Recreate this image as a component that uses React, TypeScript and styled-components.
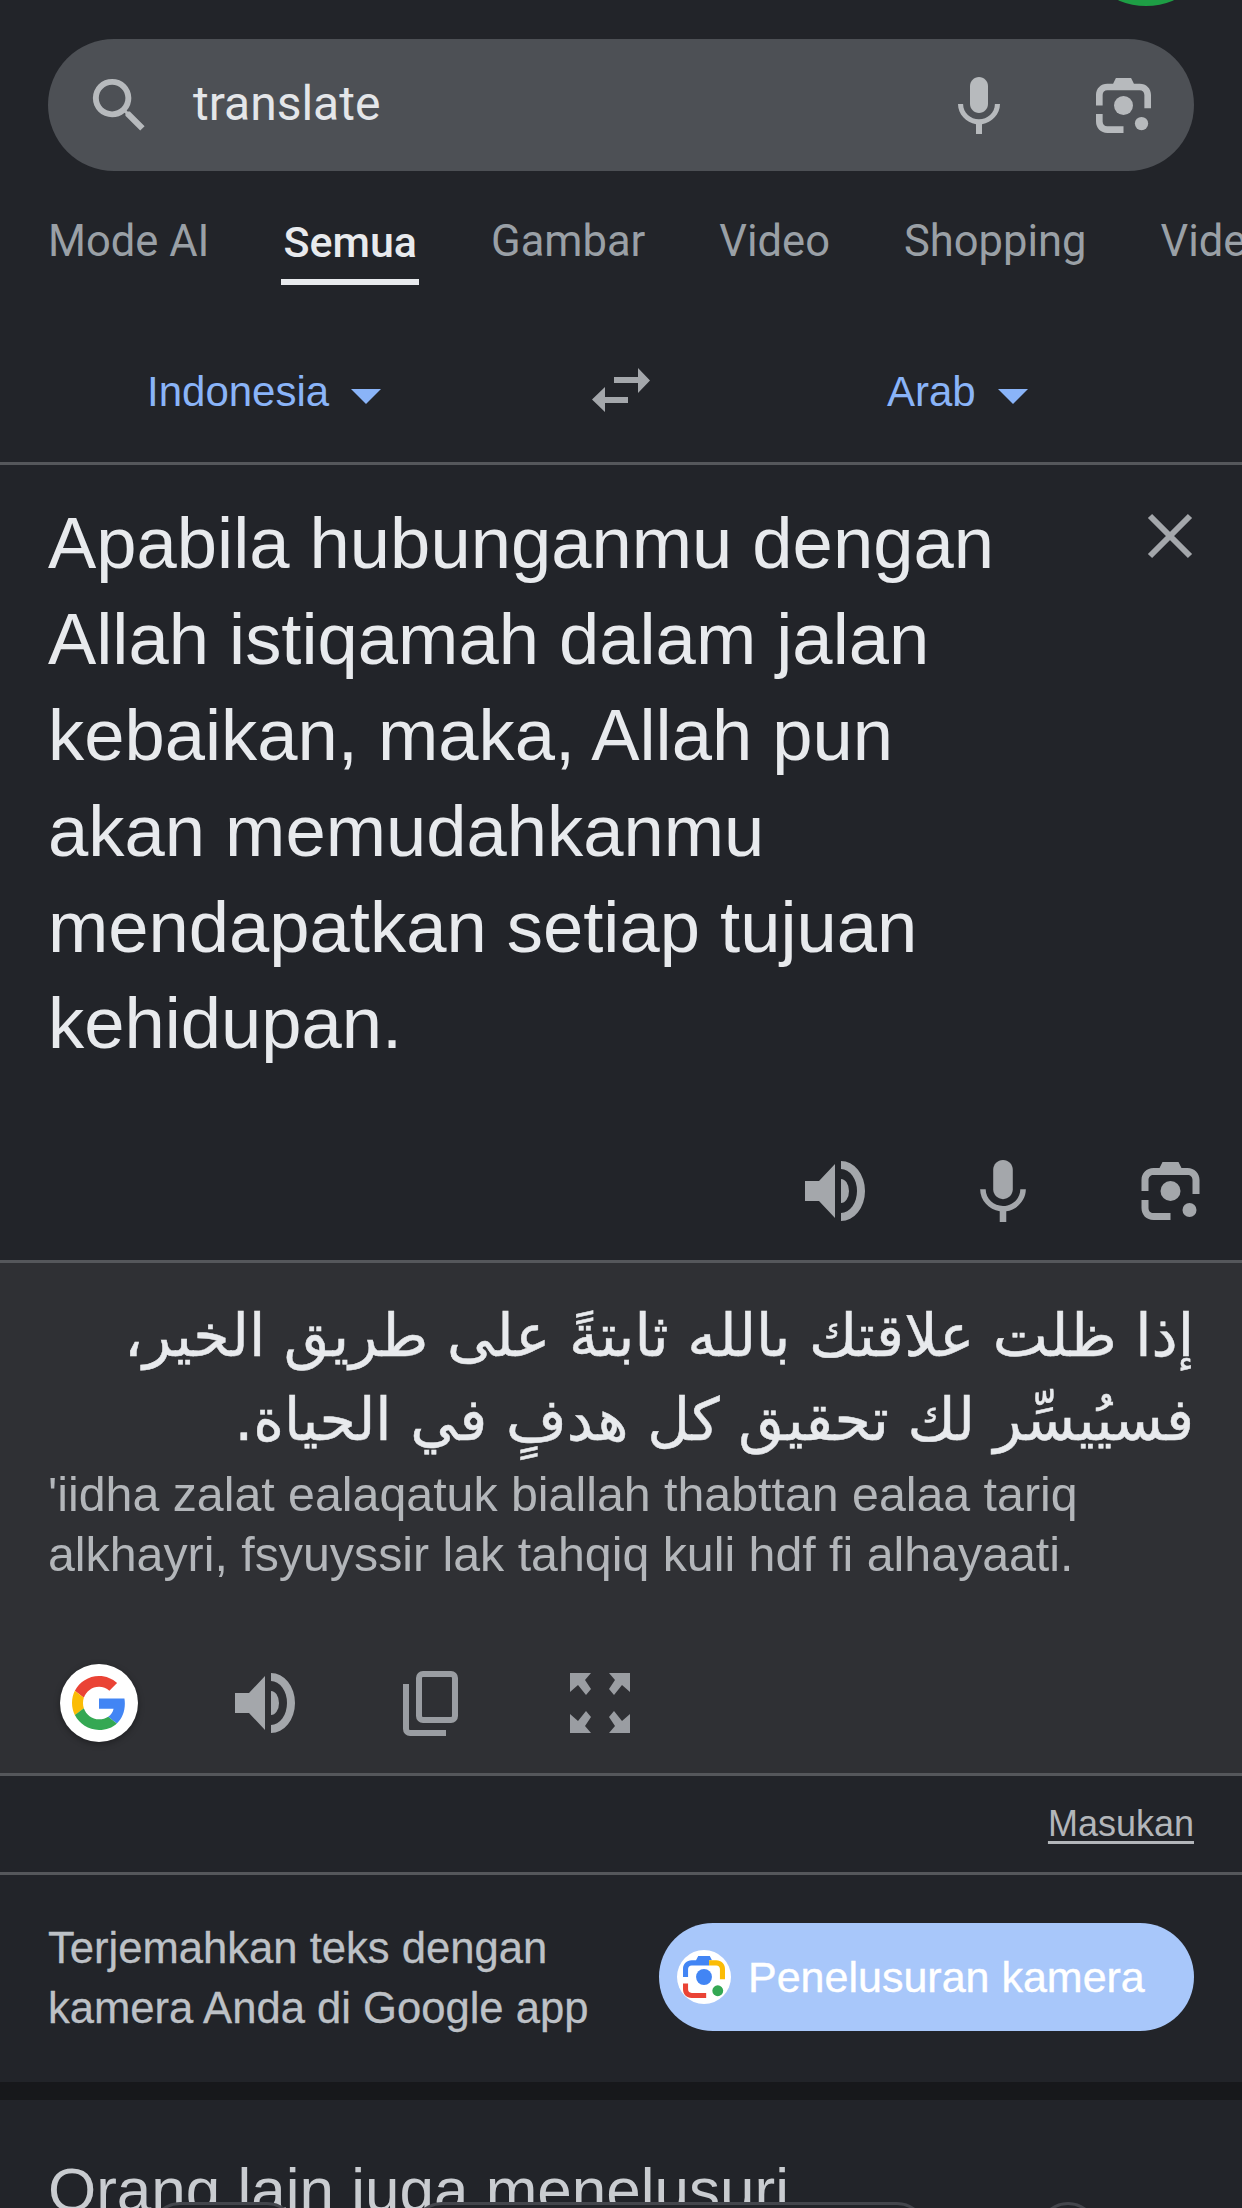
import React from "react";
import styled, { createGlobalStyle } from "styled-components";

const Global = createGlobalStyle`
  html, body {
    margin: 0;
    padding: 0;
    background: #222429;
  }
`;

const Page = styled.div`
  width: 1242px;
  height: 2208px;
  overflow: hidden;
  background: #222429;
  font-family: "Liberation Sans", Arial, sans-serif;
`;

const TopStrip = styled.div`
  height: 39px;
  display: flex;
  justify-content: flex-end;
  padding-right: 26px;
  overflow: hidden;
`;

const Avatar = styled.div`
  width: 140px;
  height: 140px;
  margin-top: -134px;
  border-radius: 50%;
  background: #1e9e45;
`;

const SearchBar = styled.div`
  margin: 0 48px;
  height: 132px;
  border-radius: 66px;
  background: #4d5055;
  display: flex;
  align-items: center;
  padding: 0 42px 0 36px;
`;

const SearchText = styled.span`
  flex: 1;
  margin: -3px 0 0 38px;
  font-family: Roboto, sans-serif;
  font-size: 48px;
  color: #e4e6e9;
`;

const SearchIcons = styled.div`
  display: flex;
  align-items: center;
  gap: 94px;
`;

const Tabs = styled.nav`
  height: 114px;
  display: flex;
  gap: 74px;
  padding-left: 48px;
  overflow: hidden;
`;

const Tab = styled.div<{ $active?: boolean }>`
  height: 113px;
  box-sizing: border-box;
  padding-top: 46px;
  font-family: Roboto, sans-serif;
  font-size: ${p => (p.$active ? 43 : 43.5)}px;
  font-weight: ${p => (p.$active ? 500 : 400)};
  line-height: 50px;
  color: ${p => (p.$active ? "#e8eaed" : "#9aa0a6")};
  white-space: nowrap;
  flex: none;
  position: relative;
  &::after {
    content: "";
    display: ${p => (p.$active ? "block" : "none")};
    position: absolute;
    left: -2px;
    right: -2px;
    top: 108px;
    height: 6px;
    background: #e8eaed;
  }
`;

const LangRow = styled.div`
  height: 180px;
  box-sizing: border-box;
  padding: 82px 0 0 147px;
  display: flex;
  align-items: flex-start;
  border-bottom: 3px solid #55575b;
`;

const LangLabel = styled.div<{ $width: number }>`
  width: ${p => p.$width}px;
  flex: none;
  display: flex;
  align-items: center;
  gap: 22px;
  font-size: 42px;
  line-height: 50px;
  color: #8ab4f8;
  white-space: nowrap;
`;

const Caret = styled.span`
  width: 0;
  height: 0;
  margin-top: 8px;
  border-left: 15px solid transparent;
  border-right: 15px solid transparent;
  border-top: 15px solid #8ab4f8;
`;

const SwapCell = styled.div`
  width: 58px;
  margin: 1px 237px 0 0;
  flex: none;
`;

const Source = styled.section`
  height: 798px;
  box-sizing: border-box;
  padding: 30px 0 0 48px;
  display: flex;
  flex-direction: column;
  border-bottom: 3px solid #55575b;
`;

const SourceTop = styled.div`
  display: flex;
  justify-content: space-between;
  padding-right: 49px;
`;

const SourceText = styled.div`
  font-size: 72.4px;
  line-height: 96px;
  color: #e8eaed;
  white-space: nowrap;
`;

const CloseBtn = styled.div`
  margin-top: 18px;
  line-height: 0;
`;

const SourceActions = styled.div`
  margin-top: 89px;
  display: flex;
  justify-content: flex-end;
  align-items: center;
  padding-right: 42px;
  gap: 115px;
`;

const Result = styled.section`
  height: 513px;
  box-sizing: border-box;
  padding: 31px 48px 0;
  background: #2f3034;
  border-bottom: 3px solid #55575b;
`;

const ArabicText = styled.div`
  direction: rtl;
  font-family: "DejaVu Sans", sans-serif;
  font-size: 58.7px;
  line-height: 84px;
  color: #e8eaed;
  white-space: nowrap;
  -webkit-text-stroke: 0.5px #e8eaed;
`;

const Romanized = styled.div`
  margin-top: 2px;
  font-size: 48.3px;
  line-height: 60px;
  color: #b3b6ba;
  white-space: nowrap;
`;

const ResultActions = styled.div`
  margin-top: 80px;
  display: flex;
  align-items: center;
  padding-left: 12px;
`;

const GoogleBadge = styled.div`
  width: 78px;
  height: 78px;
  border-radius: 50%;
  background: #fff;
  display: flex;
  align-items: center;
  justify-content: center;
  box-shadow: 0 2px 6px rgba(0, 0, 0, 0.35);
  margin-right: 97px;
`;

const ActionGap = styled.div<{ $w: number }>`
  width: ${p => p.$w}px;
  flex: none;
`;

const FeedbackRow = styled.div`
  height: 99px;
  box-sizing: border-box;
  border-bottom: 3px solid #55575b;
  display: flex;
  justify-content: flex-end;
  padding: 28px 48px 0 0;
`;

const Feedback = styled.a`
  font-size: 36px;
  line-height: 40px;
  color: #b3b6ba;
  text-decoration: underline;
  text-underline-offset: 5px;
`;

const PromoRow = styled.div`
  height: 207px;
  box-sizing: border-box;
  padding: 48px 48px 0;
  display: flex;
  justify-content: space-between;
  align-items: flex-start;
`;

const PromoText = styled.div`
  margin-top: -5px;
  font-size: 43.6px;
  line-height: 60px;
  color: #bdc1c6;
  white-space: nowrap;
  -webkit-text-stroke: 0.3px #bdc1c6;
`;

const CameraButton = styled.div`
  width: 535px;
  height: 108px;
  flex: none;
  border-radius: 54px;
  background: #a8c7fa;
  display: flex;
  align-items: center;
  padding-left: 18px;
  box-sizing: border-box;
  gap: 17px;
  font-size: 43px;
  color: #fff;
  white-space: nowrap;
  -webkit-text-stroke: 0.4px #fff;
`;

const LensBadge = styled.div`
  width: 54px;
  height: 54px;
  border-radius: 50%;
  background: #fff;
  display: flex;
  align-items: center;
  justify-content: center;
`;

const Band = styled.div`
  height: 18px;
  background: #17181b;
`;

const Related = styled.section`
  padding: 55px 48px 0;
  position: relative;
`;

const RelatedTitle = styled.h2`
  margin: 0;
  font-size: 62px;
  font-weight: 400;
  line-height: 70px;
  color: #c9ccd0;
  white-space: nowrap;
`;

const ChipRow = styled.div`
  position: absolute;
  top: 102px;
  left: 150px;
  display: flex;
`;

const Chip = styled.div<{ $w: number; $gap: number }>`
  width: ${p => p.$w}px;
  height: 60px;
  margin-right: ${p => p.$gap}px;
  box-sizing: border-box;
  border: 3px solid #44464c;
  border-radius: 30px;
  background: #222429;
`;

const Icon = styled.svg`
  display: block;
  flex: none;
`;

type GlyphProps = { w: number; h: number; color?: string };

const SearchGlyph = () => (
  <Icon width="71" height="71" viewBox="0 0 24 24" fill="#b7babd">
    <path d="M15.5 14h-.79l-.28-.27A6.47 6.47 0 0 0 16 9.5 6.5 6.5 0 1 0 9.5 16c1.61 0 3.09-.59 4.23-1.57l.27.28v.79l5 4.99L20.49 19l-4.99-5zm-6 0C7.01 14 5 11.99 5 9.5S7.01 5 9.5 5 14 7.01 14 9.5 11.99 14 9.5 14z" />
  </Icon>
);

const MicGlyph = ({ w, h, color = "#b7babd" }: GlyphProps) => (
  <Icon width={w} height={h} viewBox="0 0 14 19" fill={color}>
    <path d="M7 12c1.66 0 3-1.34 3-3V3c0-1.66-1.34-3-3-3S4 1.34 4 3v6c0 1.66 1.34 3 3 3z" />
    <path d="M12.3 9c0 3-2.54 5.1-5.3 5.1S1.7 12 1.7 9H0c0 3.41 2.72 6.23 6 6.72V19h2v-3.28c3.28-.49 6-3.31 6-6.72h-1.7z" />
  </Icon>
);

const LensGlyph = ({ w, h, color = "#b7babd" }: GlyphProps) => (
  <Icon width={w} height={h} viewBox="0 0 58 58" fill={color}>
    <path d="M21 0h16l3 6h6c7 0 12 5 12 12v14h-7V18c0-3-2-5-5-5H12c-3 0-5 2-5 5v11H0V18C0 11 5 6 12 6h6z" />
    <circle cx="29" cy="29" r="10" />
    <circle cx="48" cy="48" r="7" />
    <path d="M0 38h7v8c0 3 2 5 5 5h17v7H12C5 58 0 53 0 46z" />
  </Icon>
);

const SpeakerGlyph = () => (
  <Icon width="60" height="60" viewBox="0 0 60 60" fill="#a4a7ab">
    <path d="M0 20h14L30 3v54L14 40H0z" />
    <path d="M36 18A8 12 0 0 1 36 42z" />
    <path d="M36 0A24 30 0 0 1 36 60V52A16 22 0 0 0 36 8z" />
  </Icon>
);

const CopyGlyph = () => (
  <Icon width="56" height="65" viewBox="0 0 56 65" fill="none" stroke="#9a9da2" strokeWidth="6">
    <rect x="16" y="3" width="36" height="46" rx="4" />
    <path d="M3 13v45a4 4 0 0 0 4 4h36" />
  </Icon>
);

const ExpandGlyph = () => (
  <Icon width="60" height="60" viewBox="0 0 60 60" fill="#9a9da2">
    <path d="M0 0h21l-6 7 6 9-5 6-8-10-8 7z" />
    <path d="M60 0H39l6 7-6 9 5 6 8-10 8 7z" />
    <path d="M0 60h21l-6-7 6-9-5-6-8 10-8-7z" />
    <path d="M60 60H39l6-7-6-9 5-6 8 10 8-7z" />
  </Icon>
);

const SwapGlyph = () => (
  <Icon width="58" height="44" viewBox="0 0 58 44" fill="#a4a7ab">
    <path d="M22 9h24V0l12 12.5L46 25V15H22z" />
    <path d="M36 29H13V19L0 31.5 13 44v-9h23z" />
  </Icon>
);

const CloseGlyph = () => (
  <Icon width="46" height="46" viewBox="0 0 46 46" stroke="#a4a7ab" strokeWidth="6">
    <path d="M3 3l40 40M43 3L3 43" />
  </Icon>
);

const GoogleG = () => (
  <Icon width="54" height="54" viewBox="0 0 48 48">
    <path fill="#EA4335" d="M24 9.5c3.54 0 6.71 1.22 9.21 3.6l6.85-6.85C35.9 2.38 30.47 0 24 0 14.62 0 6.51 5.38 2.56 13.22l7.98 6.19C12.43 13.72 17.74 9.5 24 9.5z" />
    <path fill="#4285F4" d="M46.98 24.55c0-1.57-.15-3.09-.38-4.55H24v9.02h12.94c-.58 2.96-2.26 5.48-4.78 7.18l7.73 6c4.51-4.18 7.09-10.36 7.09-17.65z" />
    <path fill="#FBBC05" d="M10.53 28.59c-.48-1.45-.76-2.99-.76-4.59s.27-3.14.76-4.59l-7.98-6.19C.92 16.46 0 20.12 0 24c0 3.88.92 7.54 2.56 10.78l7.97-6.19z" />
    <path fill="#34A853" d="M24 48c6.48 0 11.93-2.13 15.89-5.81l-7.73-6c-2.15 1.45-4.92 2.3-8.16 2.3-6.26 0-11.57-4.22-13.47-9.91l-7.98 6.19C6.51 42.62 14.62 48 24 48z" />
  </Icon>
);

const LensColor = () => (
  <Icon width="42" height="42" viewBox="0 0 58 58">
    <path fill="#4285F4" d="M21 0h16l3 6h-4v7H12c-3 0-5 2-5 5v11H0V18C0 11 5 6 12 6h6z" />
    <path fill="#FBBC05" d="M36 6h10c7 0 12 5 12 12v14h-7V18c0-3-2-5-5-5H36z" />
    <circle cx="29" cy="29" r="11" fill="#4285F4" />
    <circle cx="48" cy="48" r="7.5" fill="#34A853" />
    <path fill="#EA4335" d="M0 38h7v8c0 3 2 5 5 5h20v7H12C5 58 0 53 0 46z" />
  </Icon>
);

export default function App() {
  return (
    <Page>
      <Global />
      <TopStrip>
        <Avatar />
      </TopStrip>

      <SearchBar>
        <SearchGlyph />
        <SearchText>translate</SearchText>
        <SearchIcons>
          <MicGlyph w={44} h={57} />
          <LensGlyph w={57} h={55} />
        </SearchIcons>
      </SearchBar>

      <Tabs>
        <Tab>Mode AI</Tab>
        <Tab $active>Semua</Tab>
        <Tab>Gambar</Tab>
        <Tab>Video</Tab>
        <Tab>Shopping</Tab>
        <Tab>Video pendek</Tab>
      </Tabs>

      <LangRow>
        <LangLabel $width={445}>
          Indonesia
          <Caret />
        </LangLabel>
        <SwapCell>
          <SwapGlyph />
        </SwapCell>
        <LangLabel $width={140}>
          Arab
          <Caret />
        </LangLabel>
      </LangRow>

      <Source>
        <SourceTop>
          <SourceText>
            Apabila hubunganmu dengan
            <br />
            Allah istiqamah dalam jalan
            <br />
            kebaikan, maka, Allah pun
            <br />
            akan memudahkanmu
            <br />
            mendapatkan setiap tujuan
            <br />
            kehidupan.
          </SourceText>
          <CloseBtn>
            <CloseGlyph />
          </CloseBtn>
        </SourceTop>
        <SourceActions>
          <SpeakerGlyph />
          <MicGlyph w={46} h={62} color="#a4a7ab" />
          <LensGlyph w={59} h={58} color="#a4a7ab" />
        </SourceActions>
      </Source>

      <Result>
        <ArabicText>
          إذا ظلت علاقتك بالله ثابتةً على طريق الخير،
          <br />
          فسيُيسِّر لك تحقيق كل هدفٍ في الحياة.
        </ArabicText>
        <Romanized>
          'iidha zalat ealaqatuk biallah thabttan ealaa tariq
          <br />
          alkhayri, fsyuyssir lak tahqiq kuli hdf fi alhayaati.
        </Romanized>
        <ResultActions>
          <GoogleBadge>
            <GoogleG />
          </GoogleBadge>
          <SpeakerGlyph />
          <ActionGap $w={108} />
          <CopyGlyph />
          <ActionGap $w={111} />
          <ExpandGlyph />
        </ResultActions>
      </Result>

      <FeedbackRow>
        <Feedback>Masukan</Feedback>
      </FeedbackRow>

      <PromoRow>
        <PromoText>
          Terjemahkan teks dengan
          <br />
          kamera Anda di Google app
        </PromoText>
        <CameraButton>
          <LensBadge>
            <LensColor />
          </LensBadge>
          Penelusuran kamera
        </CameraButton>
      </PromoRow>

      <Band />

      <Related>
        <RelatedTitle>Orang lain juga menelusuri</RelatedTitle>
        <ChipRow>
          <Chip $w={147} $gap={115} />
          <Chip $w={515} $gap={111} />
          <Chip $w={60} $gap={0} />
        </ChipRow>
      </Related>
    </Page>
  );
}
